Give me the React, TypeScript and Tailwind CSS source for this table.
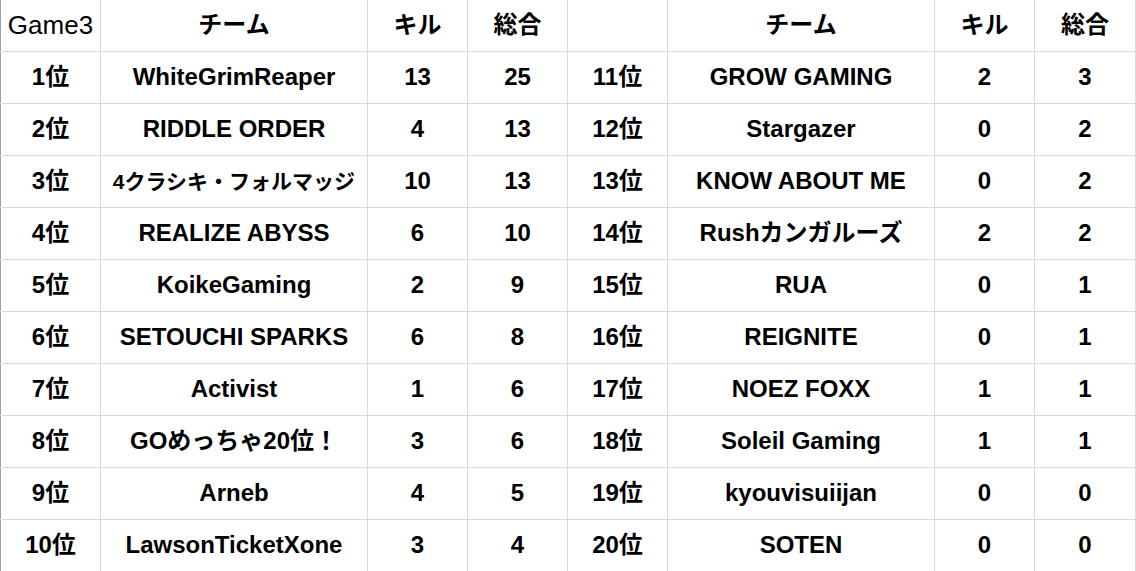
type Row = [string, string, number, number];

const left: Row[] = [
  ["1位", "WhiteGrimReaper", 13, 25],
  ["2位", "RIDDLE ORDER", 4, 13],
  ["3位", "4クラシキ・フォルマッジ", 10, 13],
  ["4位", "REALIZE ABYSS", 6, 10],
  ["5位", "KoikeGaming", 2, 9],
  ["6位", "SETOUCHI SPARKS", 6, 8],
  ["7位", "Activist", 1, 6],
  ["8位", "GOめっちゃ20位！", 3, 6],
  ["9位", "Arneb", 4, 5],
  ["10位", "LawsonTicketXone", 3, 4],
];

const right: Row[] = [
  ["11位", "GROW GAMING", 2, 3],
  ["12位", "Stargazer", 0, 2],
  ["13位", "KNOW ABOUT ME", 0, 2],
  ["14位", "Rushカンガルーズ", 2, 2],
  ["15位", "RUA", 0, 1],
  ["16位", "REIGNITE", 0, 1],
  ["17位", "NOEZ FOXX", 1, 1],
  ["18位", "Soleil Gaming", 1, 1],
  ["19位", "kyouvisuiijan", 0, 0],
  ["20位", "SOTEN", 0, 0],
];

const cell = "border-r border-b border-[#dadada] text-center align-middle p-0 whitespace-nowrap";
const first = `${cell} border-l border-l-[#a0a0a0]`;

export default function App() {
  return (
    <div
      className="w-[1136px] h-[571px] overflow-hidden bg-white text-black font-bold text-[24px] leading-none"
      style={{ fontFamily: '"Liberation Sans", "Noto Sans CJK JP", sans-serif' }}
    >
      <table className="table-fixed border-collapse w-[1135px]">
        <colgroup>
          <col className="w-[100px]" />
          <col className="w-[267px]" />
          <col className="w-[100px]" />
          <col className="w-[100px]" />
          <col className="w-[100px]" />
          <col className="w-[267px]" />
          <col className="w-[100px]" />
          <col className="w-[101px]" />
        </colgroup>
        <tbody>
          <tr className="h-[51px]">
            <td className={`${first} font-normal text-[26px]`}>Game3</td>
            <td className={cell}>チーム</td>
            <td className={cell}>キル</td>
            <td className={cell}>総合</td>
            <td className={cell}></td>
            <td className={cell}>チーム</td>
            <td className={cell}>キル</td>
            <td className={cell}>総合</td>
          </tr>
          {left.map((l, i) => {
            const r = right[i];
            // 3位's name is too long, shrunk to fit like the sheet does
            const shrink = i === 2;
            return (
              <tr key={l[0]} className="h-[52px]">
                <td className={first}>{l[0]}</td>
                <td className={`${cell} ${shrink ? "text-[21px]" : ""}`}>{l[1]}</td>
                <td className={cell}>{l[2]}</td>
                <td className={cell}>{l[3]}</td>
                <td className={cell}>{r[0]}</td>
                <td className={cell}>{r[1]}</td>
                <td className={cell}>{r[2]}</td>
                <td className={cell}>{r[3]}</td>
              </tr>
            );
          })}
        </tbody>
      </table>
    </div>
  );
}
